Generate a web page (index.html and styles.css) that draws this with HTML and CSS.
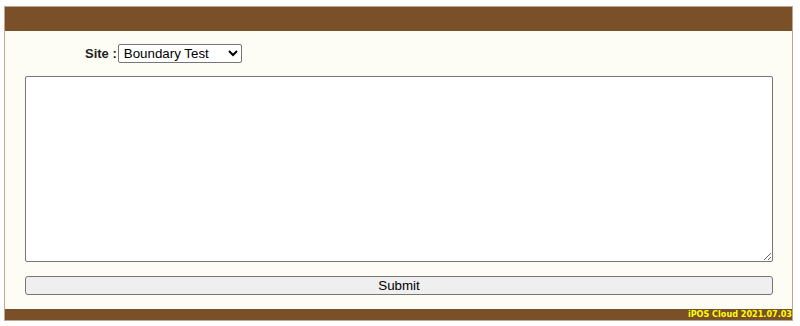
FILE: index.html
```html
<!DOCTYPE html>
<html lang="en">
<head>
    <meta charset="UTF-8">
    <title>iPOS Cloud</title>
    <link rel="stylesheet" href="styles.css">
</head>
<body>
    <div class="frame">
        <div class="header"></div>

        <form class="content">
            <div class="site-row">
                <label class="site-label" for="site">Site :</label>
                <select id="site" class="site-select">
                    <option>Boundary Test</option>
                </select>
            </div>

            <textarea class="query-box"></textarea>

            <button type="button" class="submit-btn">Submit</button>
        </form>

        <div class="footer">iPOS Cloud 2021.07.03</div>
    </div>
</body>
</html>
```

FILE: styles.css
```css
/* Base */
* {
    box-sizing: border-box;
}

body {
    margin: 6px 7px 0 4px;
    font-family: "Liberation Sans", Arial, sans-serif;
    background: #ffffff;
}

/* Outer frame */
.frame {
    border: 1px solid #bfa88f;
    background: #fdfdf5;
}

.header {
    height: 24px;
    background: #7a5028;
}

.content {
    display: flex;
    flex-direction: column;
    padding: 13px 19px 14px 20px;
}

/* Site picker */
.site-row {
    display: flex;
    align-items: center;
    gap: 1px;
    padding-left: 60px;
    margin-bottom: 13px;
}

.site-label {
    font-size: 13px;
    font-weight: bold;
    color: #222;
}

.site-select {
    width: 124px;
    height: 19px;
    font-family: "Liberation Sans", Arial, sans-serif;
    font-size: 13.33px;
    color: #000;
    background: #fff;
    border: 1px solid #767676;
    border-radius: 2px;
    padding: 0 0 0 1px;
}

/* Text area */
.query-box {
    display: block;
    width: 748px;
    height: 186px;
    border: 1px solid #767676;
    border-radius: 2px;
    background: #fff;
    margin-bottom: 14px;
}

.submit-btn {
    width: 748px;
    height: 19px;
    padding: 0;
    font-family: "Liberation Sans", Arial, sans-serif;
    font-size: 13.33px;
    color: #000;
    background: #efefef;
    border: 1px solid #767676;
    border-radius: 3px;
}

/* Footer strip */
.footer {
    height: 11px;
    background: #7a5028;
    color: #ffff00;
    font-family: "DejaVu Sans Condensed", "DejaVu Sans", sans-serif;
    font-size: 9px;
    font-weight: bold;
    line-height: 11px;
    text-align: right;
    white-space: nowrap;
}
```
